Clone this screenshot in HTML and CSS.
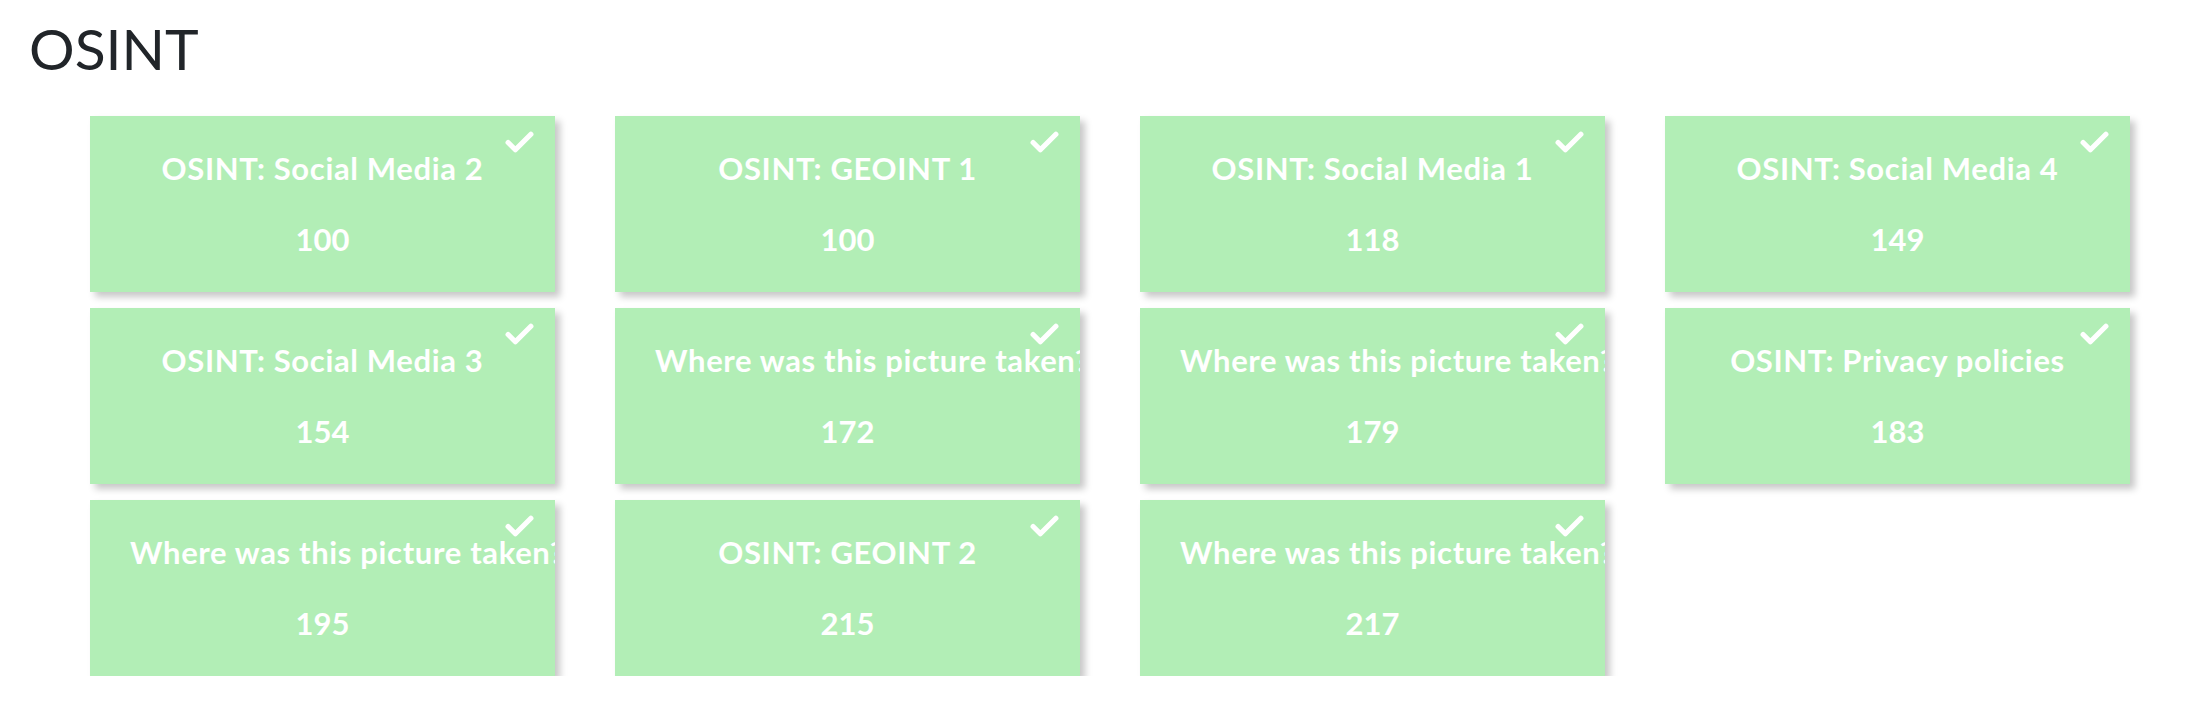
FILE: index.html
```html
<!DOCTYPE html>
<html lang="en">
<head>
<meta charset="utf-8">
<title>OSINT</title>
<link rel="stylesheet" href="styles.css">
</head>
<body>
<main class="page">
  <h1 class="category">OSINT</h1>
  <div class="grid">
    <div class="card"><svg class="check" viewBox="0 0 28 21"><polyline points="3,11 10,18 25,3"/></svg><p class="name">OSINT: Social Media 2</p><p class="value">100</p></div>
    <div class="card"><svg class="check" viewBox="0 0 28 21"><polyline points="3,11 10,18 25,3"/></svg><p class="name">OSINT: GEOINT 1</p><p class="value">100</p></div>
    <div class="card"><svg class="check" viewBox="0 0 28 21"><polyline points="3,11 10,18 25,3"/></svg><p class="name">OSINT: Social Media 1</p><p class="value">118</p></div>
    <div class="card"><svg class="check" viewBox="0 0 28 21"><polyline points="3,11 10,18 25,3"/></svg><p class="name">OSINT: Social Media 4</p><p class="value">149</p></div>
    <div class="card"><svg class="check" viewBox="0 0 28 21"><polyline points="3,11 10,18 25,3"/></svg><p class="name">OSINT: Social Media 3</p><p class="value">154</p></div>
    <div class="card"><svg class="check" viewBox="0 0 28 21"><polyline points="3,11 10,18 25,3"/></svg><p class="name">Where was this picture taken?</p><p class="value">172</p></div>
    <div class="card"><svg class="check" viewBox="0 0 28 21"><polyline points="3,11 10,18 25,3"/></svg><p class="name">Where was this picture taken?</p><p class="value">179</p></div>
    <div class="card"><svg class="check" viewBox="0 0 28 21"><polyline points="3,11 10,18 25,3"/></svg><p class="name">OSINT: Privacy policies</p><p class="value">183</p></div>
    <div class="card"><svg class="check" viewBox="0 0 28 21"><polyline points="3,11 10,18 25,3"/></svg><p class="name">Where was this picture taken?</p><p class="value">195</p></div>
    <div class="card"><svg class="check" viewBox="0 0 28 21"><polyline points="3,11 10,18 25,3"/></svg><p class="name">OSINT: GEOINT 2</p><p class="value">215</p></div>
    <div class="card"><svg class="check" viewBox="0 0 28 21"><polyline points="3,11 10,18 25,3"/></svg><p class="name">Where was this picture taken?</p><p class="value">217</p></div>
  </div>
</main>
</body>
</html>
```
FILE: styles.css
```css
html, body {
  margin: 0;
  padding: 0;
  background: #ffffff;
}
body {
  font-family: Lato, "Liberation Sans", sans-serif;
  color: #212529;
}
.page {
  padding: 14px 56px 0 29px;
}
.category {
  margin: 0;
  font-size: 57px;
  font-weight: 400;
  line-height: 1.2;
  color: #212529;
}
.grid {
  margin: 34px 0 0 61px;
  display: grid;
  grid-template-columns: repeat(4, 465px);
  grid-auto-rows: 176px;
  column-gap: 60px;
  row-gap: 16px;
}
.card {
  position: relative;
  background: #b2eeb6;
  box-shadow: 5px 5px 7px rgba(0, 0, 0, 0.22);
  overflow: hidden;
  display: flex;
  flex-direction: column;
  justify-content: center;
  gap: 34px;
  padding: 0 40px;
  text-align: center;
  color: #ffffff;
  font-weight: 700;
  font-size: 31px;
}
.card p {
  margin: 0;
  line-height: 1.2;
  white-space: nowrap;
}
.name {
  letter-spacing: 0.65px;
}
.value {
  letter-spacing: 0;
}
.check {
  position: absolute;
  top: 15px;
  right: 21px;
  width: 29px;
  height: 22px;
}
.check polyline {
  fill: none;
  stroke: #ffffff;
  stroke-width: 5;
  stroke-linecap: round;
  stroke-linejoin: round;
}
```
